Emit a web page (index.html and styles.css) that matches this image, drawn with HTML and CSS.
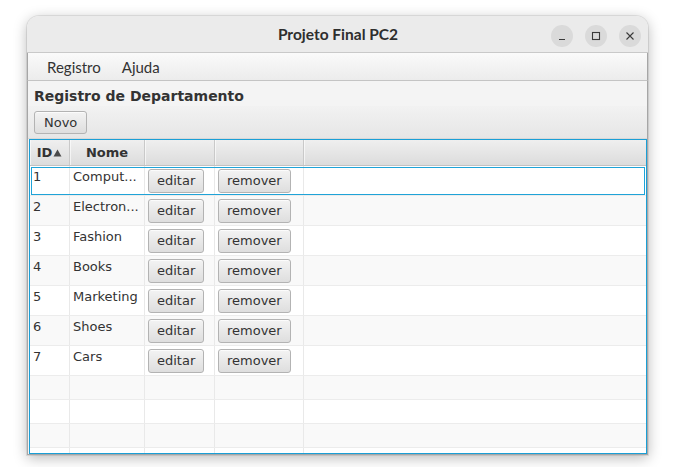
FILE: index.html
```html
<!DOCTYPE html>
<html>
<head>
<meta charset="utf-8">
<link rel="stylesheet" href="styles.css">
</head>
<body>
<div class="window">
  <div class="titlebar">
    <span class="title">Projeto Final PC2</span>
    <div class="controls">
      <span class="ctl"><svg width="10" height="10" viewBox="0 0 10 10"><path d="M2 8.5h6" stroke="#3a3a3a" stroke-width="1.2"/></svg></span>
      <span class="ctl"><svg width="10" height="10" viewBox="0 0 10 10"><rect x="1.5" y="1.5" width="7" height="7" fill="none" stroke="#3a3a3a" stroke-width="1.1"/></svg></span>
      <span class="ctl"><svg width="10" height="10" viewBox="0 0 10 10"><path d="M1.5 1.5l7 7M8.5 1.5l-7 7" stroke="#3a3a3a" stroke-width="1.1"/></svg></span>
    </div>
  </div>
  <div class="menubar">
    <span class="menu">Registro</span>
    <span class="menu">Ajuda</span>
  </div>
  <div class="scene">
    <div class="heading">Registro de Departamento</div>
    <div class="toolbar"><button class="btn">Novo</button></div>
    <div class="table">
      <div class="thead">
        <div class="th">ID<svg class="arrow" width="9" height="8" viewBox="0 0 9 8"><path d="M0.5 7.5L4.5 0.5L8.5 7.5Z" fill="#4a4a4a"/></svg></div>
        <div class="th">Nome</div>
        <div class="th"></div>
        <div class="th"></div>
        <div class="th"></div>
      </div>
      <div class="tbody">
        <div class="row full selected"><div class="td">1</div><div class="td">Comput...</div><div class="td"><button class="btn">editar</button></div><div class="td"><button class="btn">remover</button></div><div class="td"></div></div>
        <div class="row full odd"><div class="td">2</div><div class="td">Electron...</div><div class="td"><button class="btn">editar</button></div><div class="td"><button class="btn">remover</button></div><div class="td"></div></div>
        <div class="row full"><div class="td">3</div><div class="td">Fashion</div><div class="td"><button class="btn">editar</button></div><div class="td"><button class="btn">remover</button></div><div class="td"></div></div>
        <div class="row full odd"><div class="td">4</div><div class="td">Books</div><div class="td"><button class="btn">editar</button></div><div class="td"><button class="btn">remover</button></div><div class="td"></div></div>
        <div class="row full"><div class="td">5</div><div class="td">Marketing</div><div class="td"><button class="btn">editar</button></div><div class="td"><button class="btn">remover</button></div><div class="td"></div></div>
        <div class="row full odd"><div class="td">6</div><div class="td">Shoes</div><div class="td"><button class="btn">editar</button></div><div class="td"><button class="btn">remover</button></div><div class="td"></div></div>
        <div class="row full"><div class="td">7</div><div class="td">Cars</div><div class="td"><button class="btn">editar</button></div><div class="td"><button class="btn">remover</button></div><div class="td"></div></div>
        <div class="row empty odd"><div class="td"></div><div class="td"></div><div class="td"></div><div class="td"></div><div class="td"></div></div>
        <div class="row empty"><div class="td"></div><div class="td"></div><div class="td"></div><div class="td"></div><div class="td"></div></div>
        <div class="row empty odd"><div class="td"></div><div class="td"></div><div class="td"></div><div class="td"></div><div class="td"></div></div>
        <div class="row empty"><div class="td"></div><div class="td"></div><div class="td"></div><div class="td"></div><div class="td"></div></div>
      </div>
    </div>
  </div>
</div>
</body>
</html>
```

FILE: styles.css
```css
* { box-sizing: border-box; }
html, body { margin: 0; padding: 0; }
body {
  background: #ffffff;
  width: 695px;
  height: 467px;
  overflow: hidden;
  font-family: "DejaVu Sans", sans-serif;
}
.window {
  margin: 16px 0 0 27px;
  width: 621px;
  height: 439px;
  display: flex;
  flex-direction: column;
  border-radius: 12px 12px 0 0;
  box-shadow: 0 3px 14px rgba(0,0,0,0.28), 0 0 0 1px rgba(0,0,0,0.08);
  overflow: hidden;
  background: #f4f4f4;
}
.titlebar {
  height: 37px;
  flex: none;
  background: #ebebeb;
  border-bottom: 1px solid #c9c9c9;
  display: flex;
  align-items: center;
  justify-content: center;
  position: relative;
}
.title {
  font-family: "Lato", "Noto Sans", sans-serif;
  font-weight: bold;
  font-size: 15.5px;
  color: #2e2e2e;
  margin-left: 1px;
}
.controls {
  position: absolute;
  right: 7px;
  top: 9px;
  display: flex;
  gap: 12px;
}
.ctl {
  width: 22px;
  height: 22px;
  border-radius: 50%;
  background: #dadada;
  display: flex;
  align-items: center;
  justify-content: center;
}
.menubar {
  height: 28px;
  flex: none;
  background: linear-gradient(#fafafa, #ececec);
  border-bottom: 1px solid #c4c4c4;
  border-left: 1px solid #a6a6a6;
  border-right: 1px solid #a6a6a6;
  display: flex;
  align-items: center;
  padding-left: 19px;
  gap: 21px;
  font-family: "Lato", "Noto Sans", sans-serif;
  font-size: 15px;
  color: #333;
}
.scene {
  flex: 1;
  display: flex;
  flex-direction: column;
  border-left: 1px solid #a6a6a6;
  border-right: 1px solid #a6a6a6;
  border-bottom: 1px solid #a6a6a6;
  min-height: 0;
}
.heading {
  height: 25px;
  flex: none;
  padding: 7px 0 0 6px;
  font-weight: bold;
  font-size: 14px;
  color: #333;
  line-height: 17px;
}
.toolbar {
  flex: none;
  height: 33px;
  padding: 5px 6px 0;
  background: linear-gradient(#f2f2f2, #e6e6e6);
  border-bottom: 1px solid #d8d8d8;
}
.btn {
  font-family: "DejaVu Sans", sans-serif;
  font-size: 13px;
  line-height: 16px;
  color: #333;
  padding: 3px 8px;
  border: 1px solid #b3b3b3;
  border-radius: 3px;
  background: linear-gradient(#f3f3f3, #dedede);
  box-shadow: inset 0 1px 0 rgba(255,255,255,0.7);
  margin: 0;
  height: 24px;
}
.toolbar .btn { height: 23px; padding: 2px 9px; }
.table {
  flex: 1;
  min-height: 0;
  overflow: hidden;
  border: 1px solid #1a9fd6;
  box-shadow: inset 0 0 0 1px rgba(26,159,214,0.35);
  background: #fff;
  margin: 0 0 0 1px;
}
.thead, .row {
  display: grid;
  grid-template-columns: 40px 75px 70px 89px 1fr;
}
.thead {
  height: 26px;
  background: linear-gradient(#efefef, #dcdcdc);
  border-bottom: 1px solid #c2c2c2;
}
.th {
  border-right: 1px solid #c9c9c9;
  box-shadow: inset 1px 0 0 rgba(255,255,255,0.6);
  display: flex;
  align-items: center;
  justify-content: center;
  font-weight: bold;
  font-size: 13px;
  color: #333;
}
.th:last-child { border-right: none; }
.arrow {
  margin-left: 1px;
  margin-top: 1px;
}
.row {
  background: #fff;
  border-bottom: 1px solid #ececec;
}
.row.odd { background: #f9f9f9; }
.row.full { height: 30px; }
.row.empty { height: 24px; }
.row.selected {
  background: #fff;
  outline: 1px solid #1fa3d8;
  outline-offset: -2px;
}
.td {
  border-right: 1px solid #e9e9e9;
  padding: 3px 0 0 3px;
  font-size: 13px;
  line-height: 16px;
  color: #333;
  white-space: nowrap;
  overflow: hidden;
}
.td:last-child { border-right: none; }
```
